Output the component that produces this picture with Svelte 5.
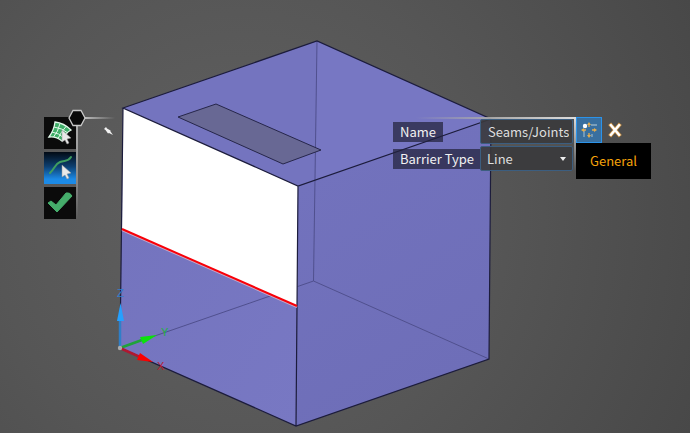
<script>
  let name = $state("Seams/Joints");
  let barrierType = $state("Line");
  let tool = $state("edge");
</script>

<main class="viewport">
  <svg class="scene" viewBox="0 0 690 433" role="img" aria-label="Box model">
    <defs>
      <linearGradient id="left-face" x1="0" y1="0" x2="1" y2="1">
        <stop offset="0" stop-color="#7373bd" />
        <stop offset="1" stop-color="#7878c3" />
      </linearGradient>
      <linearGradient id="right-face" x1="0" y1="0" x2="0.4" y2="1">
        <stop offset="0" stop-color="#7373be" />
        <stop offset="1" stop-color="#6e6eb8" />
      </linearGradient>
    </defs>

    <!-- faces -->
    <polygon points="123,108 317,41 491,119 298,186" fill="#7474bf" />
    <polygon points="317,41 491,119 316,180" fill="#7777c3" />
    <polygon points="123,108 298,186 296,426 120,348" fill="url(#left-face)" />
    <polygon points="298,186 491,119 489,359 296,426" fill="url(#right-face)" />

    <!-- hidden edges -->
    <g class="hidden-edge">
      <path d="M317 41 313.500 281M120 348 313.500 281 489 359" />
    </g>

    <polygon class="slot" points="178,117 216,104 321,150 283,164" />
    <polygon points="123,108 298,186 297,306 122,229" fill="#fff" />

    <g class="edge">
      <path d="M123 108 317 41 491 119 298 186ZM123 108 120 348 296 426 489 359 491 119M298 186 296 426" />
    </g>
    <path d="M122 230 297 307" stroke="#c9a9c9" stroke-width="2" />
    <path d="M122 229 297 306" stroke="#f80008" stroke-width="2" />

    <!-- axis triad -->
    <g class="axes">
      <path d="M120 347V319" stroke="#2f7fc8" stroke-width="2.500" />
      <path d="M120.500 303 124 321H117Z" fill="#25a0ff" />
      <path d="M120 348 142 340" stroke="#1fa33a" stroke-width="2.500" />
      <path d="M157 335 143 344 140 337Z" fill="#0be20b" />
      <path d="M120 348 140 357" stroke="#b01830" stroke-width="2.500" />
      <path d="M153 362 137 360 140 353Z" fill="#fa0000" />
      <circle cx="120" cy="348" r="2.200" fill="#aaa" />
      <text x="117" y="297" fill="#2f7fd0">Z</text>
      <text x="161" y="336" fill="#20b040">Y</text>
      <text x="157" y="370" fill="#b81c34">X</text>
    </g>
  </svg>

  <nav class="toolbar" aria-label="Selection tools">
    <button class:active={tool === "face"} aria-label="Select faces" onclick={() => (tool = "face")}>
      <svg viewBox="0 0 32 32">
        <path d="M11 5Q20 6 27 13Q21 16 18 24Q12 19 5 20Q10 13 11 5Z" fill="#3fae68" stroke="#e2f8ea" stroke-width="1.300" />
        <path d="M16 6.500Q14 15 9.500 20M22 9.500Q17 15 14 21.500M10 10Q18 11 24 16M8 15Q15 16 20 21" fill="none" stroke="#e2f8ea" />
        <path class="cursor" d="M18 13V25L21 23 23 27 25 26 23 22 27 21Z" />
      </svg>
    </button>
    <button class:active={tool === "edge"} aria-label="Select edges" onclick={() => (tool = "edge")}>
      <svg viewBox="0 0 32 32">
        <path d="M6 21C11 16 11 12 16 10S24 10 27 5" fill="none" stroke="#3f9d60" stroke-width="2" stroke-linecap="round" />
        <path class="cursor" d="M18 13V25L21 23 23 27 25 26 23 22 27 21Z" />
      </svg>
    </button>
    <button aria-label="Complete">
      <svg viewBox="0 0 32 32">
        <path d="M4 16 7 14 12 18 22 6Q26 5 28 9L13 25Z" fill="#45ad6b" stroke="#45ad6b" stroke-linejoin="round" />
      </svg>
    </button>
    <span class="rail"></span>
    <span class="handle-line"></span>
    <svg class="handle" viewBox="0 0 18 18">
      <path d="M5 1.500H13L17 9 13 16.500H5L1 9Z" fill="#0a0a0a" stroke="#c8c8c8" stroke-width="1.300" />
    </svg>
    <svg class="pin" viewBox="0 0 12 12">
      <path d="M2 4 4 2 5 3.500 8.500 5.500 8.500 6.500 11 10 7 8 6 8.500 3.500 5Z" fill="#f2f2f2" />
    </svg>
  </nav>

  <section class="panel" aria-label="Barrier properties">
    <div class="fields">
      <div class="field">
        <label for="barrier-name">Name</label>
        <input id="barrier-name" bind:value={name} />
      </div>
      <div class="field">
        <label for="barrier-type">Barrier Type</label>
        <div class="select-wrap">
          <select id="barrier-type" bind:value={barrierType}>
            <option>Line</option>
            <option>Surface</option>
          </select>
        </div>
      </div>
    </div>
    <div class="side">
      <div class="actions">
        <button class="general" aria-label="General" aria-describedby="general-tip">
          <svg viewBox="0 0 24 24">
            <path d="M7 12V19M14 7H20M15 16V19" stroke="#8fb0c8" stroke-width="1.300" />
            <path d="M12 6V9M12 15V18M6 12H9M15 12H18" stroke="#e5ad4d" stroke-width="1.300" />
            <path d="M12 4 14 7H10ZM12 20 10 17H14ZM4 12 7 10V14ZM20 12 17 14V10Z" fill="#e5ad4d" />
            <circle cx="8" cy="8" r="2.200" fill="#fff" />
          </svg>
        </button>
        <button class="close" aria-label="Close">
          <svg viewBox="0 0 18 18">
            <path d="M3 2 15 16M15 2 3 16" stroke="#c68b3c" stroke-width="4.400" />
            <path d="M3.500 2.500 14.500 15.500M14.500 2.500 3.500 15.500" stroke="#fff" stroke-width="2.800" />
          </svg>
        </button>
      </div>
      <div class="tip" id="general-tip" role="tooltip">General</div>
    </div>
  </section>
</main>

<style>
  :global(body) {
    margin: 0;
    background: #505050;
  }

  .viewport {
    position: relative;
    min-height: 100vh;
    overflow: hidden;
    background: radial-gradient(circle at 35% 50%, #616161 0%, #565656 50%, #484848 100%);
    color: #f2f2f2;
    font: 13px/20px "Noto Sans CJK SC", "Noto Sans", sans-serif;
  }

  .scene {
    display: block;
    width: 100%;
  }

  .edge path {
    fill: none;
    stroke: #1c1c3c;
    stroke-width: 1.2;
  }

  .hidden-edge path {
    fill: none;
    stroke: #50508e;
    stroke-width: 1;
  }

  .slot {
    fill: #686894;
    stroke: #26264a;
    stroke-width: 1;
  }

  .axes text {
    font: 11px "Liberation Sans", sans-serif;
  }

  button {
    display: grid;
    place-items: center;
    box-sizing: border-box;
    padding: 0;
    border: 0;
    cursor: pointer;
  }

  .toolbar {
    position: absolute;
    top: 117px;
    left: 44px;
    display: grid;
    gap: 3px;
  }

  .toolbar button {
    width: 32px;
    height: 32px;
    background: #0b0b0b;
  }

  .toolbar button svg {
    width: 32px;
    height: 32px;
  }

  .toolbar .active {
    background: linear-gradient(#020a14, #0d3f70 45%, #1c8ae6 85%);
  }

  .cursor {
    fill: #e8e8e8;
    stroke: #999;
    stroke-width: 0.5;
  }

  .rail {
    position: absolute;
    top: 0;
    bottom: 0;
    left: 32px;
    width: 2px;
    background: linear-gradient(#b0b0b0, #8a8a8a 60%, transparent);
  }

  .handle-line {
    position: absolute;
    top: 0;
    left: 41px;
    width: 30px;
    height: 2px;
    background: linear-gradient(90deg, #bbb, transparent);
  }

  .handle {
    position: absolute;
    top: -8px;
    left: 24px;
    width: 18px;
  }

  .pin {
    position: absolute;
    top: 8px;
    left: 58px;
    width: 12px;
  }

  .panel {
    position: absolute;
    top: 117px;
    left: 393px;
    display: flex;
  }

  .fields {
    position: relative;
    display: grid;
    gap: 2px;
    align-content: start;
    padding: 2px 3px 0 0;
  }

  /* frame lines that fade out away from the corner */
  .fields::before,
  .fields::after {
    content: "";
    position: absolute;
    top: 0;
    right: 0;
  }

  .fields::before {
    width: 160px;
    height: 2px;
    background: linear-gradient(270deg, #ddd, #aaa 50%, transparent);
  }

  .fields::after {
    width: 2px;
    height: 54px;
    background: linear-gradient(#ddd, transparent);
  }

  .field {
    display: grid;
    grid-template-columns: 87px 93px;
    align-items: center;
  }

  label {
    justify-self: start;
    padding: 0 7px;
    background: rgba(35, 35, 60, 0.72);
    white-space: nowrap;
  }

  input,
  select {
    box-sizing: border-box;
    width: 100%;
    height: 25px;
    margin: 0;
    padding: 0 3px 0 7px;
    border: 1px solid #3c5e80;
    border-radius: 2px;
    background: rgba(58, 58, 60, 0.9);
    color: #dedede;
    font: inherit;
  }

  select {
    display: block;
    padding-left: 6px;
    appearance: none;
  }

  .select-wrap {
    position: relative;
  }

  .select-wrap::after {
    content: "";
    position: absolute;
    top: 11px;
    right: 7px;
    border: 3px solid transparent;
    border-top: 4px solid #eee;
    border-bottom: 0;
    pointer-events: none;
  }

  .actions {
    display: flex;
  }

  .general {
    width: 26px;
    height: 26px;
    border: 1px solid #2b93ea;
    background: #396f9f;
  }

  .general svg {
    width: 24px;
  }

  .close {
    width: 26px;
    height: 26px;
    background: none;
  }

  .close svg {
    width: 16px;
  }

  .tip {
    padding: 8px 14px;
    background: #000;
    color: #f5a30a;
  }
</style>
